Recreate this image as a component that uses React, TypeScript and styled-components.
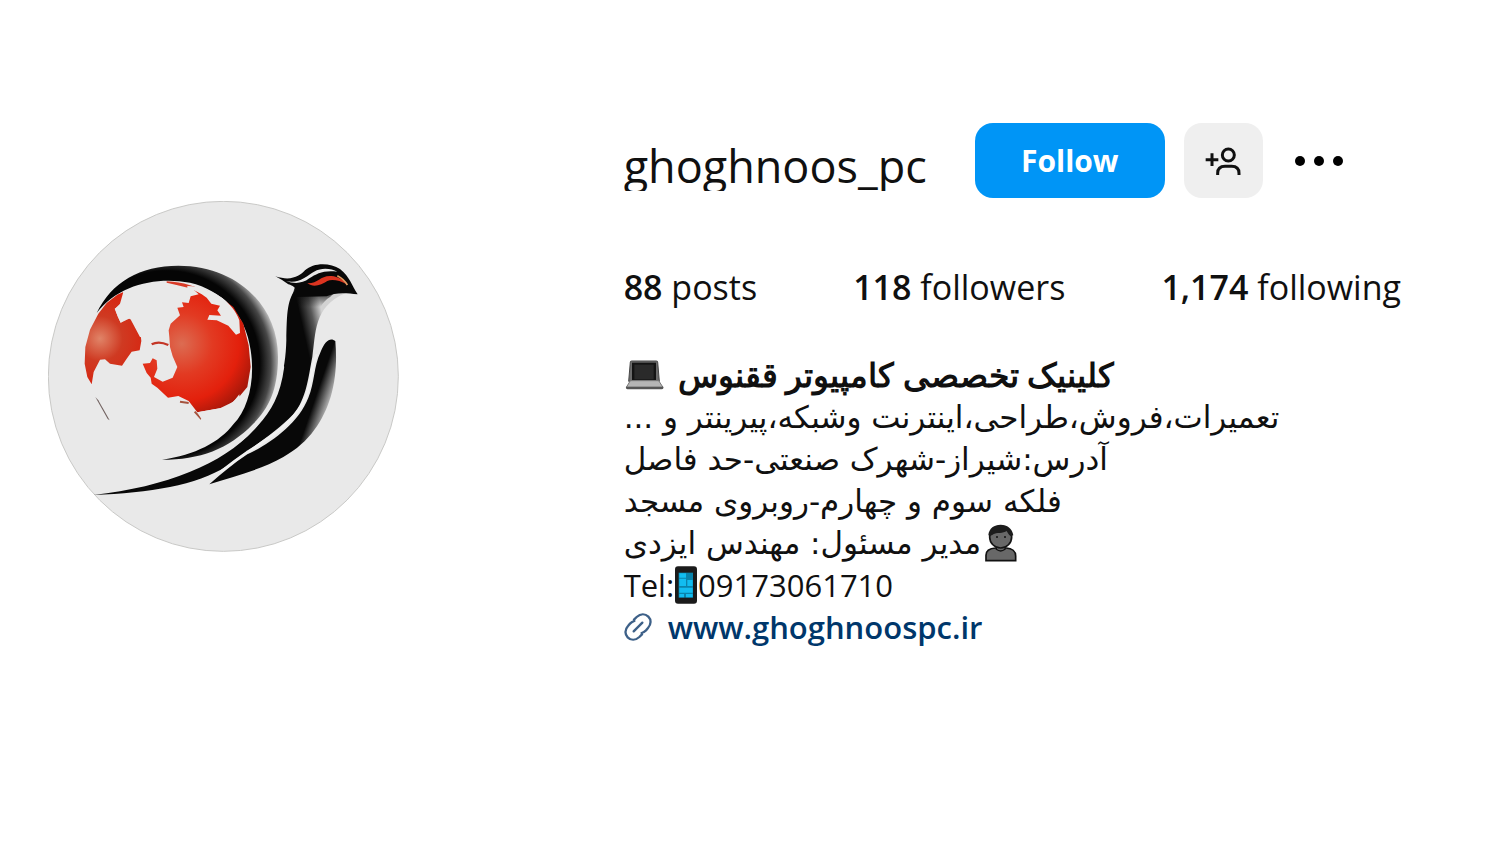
import React from 'react';
import styled, { createGlobalStyle } from 'styled-components';

const GlobalStyle = createGlobalStyle`
  body {
    margin: 0;
    background: #fff;
    color: #101010;
    font-family: 'Open Sans', 'Noto Sans', sans-serif;
  }
`;

const Profile = styled.main`
  display: grid;
  grid-template-columns: 41% 1fr;
  align-items: start;
  padding: 123px 48px 0;
`;

const Avatar = styled.svg`
  display: block;
  width: 351px;
  height: 351px;
  margin-top: 78px;
`;

const Details = styled.section`
  min-width: 0;
`;

const Header = styled.header`
  display: flex;
  align-items: center;
  height: 75px;
`;

const Username = styled.h1`
  margin: 0 48px 0 0;
  height: 60px;
  overflow: hidden;
  font-size: 45px;
  font-weight: 400;
  line-height: 70px;
`;

const Button = styled.button<{ $primary?: boolean }>`
  display: flex;
  align-items: center;
  justify-content: center;
  width: ${(p) => (p.$primary ? 190 : 79)}px;
  height: 75px;
  margin-right: ${(p) => (p.$primary ? 19 : 32)}px;
  padding: 0;
  border: 0;
  border-radius: 18px;
  background: ${(p) => (p.$primary ? '#0095f6' : '#efefef')};
  color: ${(p) => (p.$primary ? '#fff' : '#101010')};
  font-family: inherit;
  font-size: 30px;
  font-weight: 700;
  cursor: pointer;
`;

const MoreButton = styled.button`
  display: flex;
  padding: 0;
  border: 0;
  background: none;
  cursor: pointer;
`;

const Stats = styled.ul`
  display: flex;
  gap: 96px;
  margin: 64px 0 42px;
  padding: 0;
  list-style: none;
  font-size: 34px;
  line-height: 50px;
  white-space: nowrap;

  b {
    font-weight: 600;
  }
`;

const Line = styled.div<{ $gap?: number }>`
  display: flex;
  align-items: center;
  justify-content: flex-start;
  gap: ${(p) => p.$gap ?? 4}px;
  height: 42px;
  font-size: 31px;
  line-height: 42px;
  white-space: nowrap;

  &[dir='rtl'] {
    justify-content: flex-end;
    font-family: 'DejaVu Sans', sans-serif;
  }
`;

const Title = styled.h2`
  margin: 0;
  font-family: 'Open Sans', sans-serif;
  font-size: 33px;
  font-weight: 700;
`;

const SiteLink = styled.a`
  color: #00376b;
  font-weight: 600;
  text-decoration: none;
`;

const PhoenixLogo = () => (
  <Avatar viewBox="24 32 1053 1053" role="img" aria-label="ghoghnoos_pc profile picture">
    <defs>
      <radialGradient id="globeLeft" gradientUnits="userSpaceOnUse" cx="180" cy="445" r="150">
        <stop offset="0" stopColor="#e08468" />
        <stop offset="0.45" stopColor="#cf3a22" />
        <stop offset="1" stopColor="#d8230f" />
      </radialGradient>
      <radialGradient id="globeRight" gradientUnits="userSpaceOnUse" cx="425" cy="460" r="230">
        <stop offset="0" stopColor="#dc6c52" />
        <stop offset="0.4" stopColor="#e23a22" />
        <stop offset="0.75" stopColor="#e3200c" />
        <stop offset="1" stopColor="#a8180a" />
      </radialGradient>
      <radialGradient id="arc" gradientUnits="userSpaceOnUse" cx="380" cy="520" r="336">
        <stop offset="0.83" stopColor="#050505" />
        <stop offset="0.93" stopColor="#484848" />
        <stop offset="1" stopColor="#b4b4b4" />
      </radialGradient>
      <linearGradient id="neck" gradientUnits="userSpaceOnUse" x1="740" y1="400" x2="848" y2="376">
        <stop offset="0.4" stopColor="#080808" />
        <stop offset="0.72" stopColor="#585858" />
        <stop offset="1" stopColor="#d2d2d2" />
      </linearGradient>
      <linearGradient id="wing" gradientUnits="userSpaceOnUse" x1="820" y1="540" x2="896" y2="566">
        <stop offset="0.4" stopColor="#080808" />
        <stop offset="1" stopColor="#c4c4c4" />
      </linearGradient>
      <linearGradient id="head" gradientUnits="userSpaceOnUse" x1="850" y1="270" x2="850" y2="350">
        <stop offset="0.3" stopColor="#080808" />
        <stop offset="1" stopColor="#080808" stopOpacity="0" />
      </linearGradient>
    </defs>
    <circle cx="550" cy="558" r="525" fill="#e9e9e9" stroke="#c9c9c7" strokeWidth="3" />
    <path
      fill="url(#arc)"
      d="M170 368C215 275 300 226 415 226C590 226 714 345 714 500C714 600 685 655 640 700C565 777 480 808 366 808C465 795 540 755 580 702C625 655 646 570 632 480C618 370 545 300 450 277C350 258 235 282 170 368Z"
    />
    <path
      fill="url(#globeLeft)"
      d="M250 305L232 313L200 338L175 370L150 418L136 470L134 520L142 560L155 582L161 545L180 508L195 507L210 520L246 526L258 508L275 484L299 480L304 452L300 415L286 392L262 383L242 397L233 378L224 355L240 345L250 322Z"
    />
    <path fill="#e9e9e9" d="M250 305C320 268 400 268 470 300C560 340 604 400 622 450L590 500L390 450L300 440L270 384L242 397L233 378L225 355L240 340Z" />
    <path fill="#d93a26" d="M380 273C430 276 470 288 500 306C465 296 425 288 380 277Z" />
    <path
      fill="url(#globeRight)"
      d="M452 318L446 338L426 336L431 350L412 352L420 375L392 400L386 420L388 440L390 470L398 498L412 530L398 562L368 574L342 560L352 535L350 510L338 504L330 518L308 520L320 548L332 562L335 580L352 592L384 622L415 617L446 632L472 666L560 650L600 616L622 590L632 530L626 465L610 400L580 350L540 320L500 300L452 290L476 312Z"
    />
    <path fill="#e9e9e9" d="M442 287C480 288 518 302 548 324C570 342 588 362 598 390L600 428L588 433L565 406L530 390L502 388L508 374L543 376L532 360L540 346L514 340L500 322C480 308 462 298 442 294Z" />
    <path fill="none" stroke="#c43626" strokeWidth="7" d="M335 462C350 454 368 456 385 464" />
    <path fill="none" stroke="#a5543f" strokeWidth="6" d="M420 634L446 638M464 664L484 686" />
    <path fill="#e9e9e9" d="M484 686L472 666L540 654L580 634L598 612L600 640L588 655L584 682C572 700 556 714 540 724L470 720Z" />
    <path fill="#70605e" d="M166 620L175 630L209 690L203 686Z" />
    <path
      fill="url(#neck)"
      d="M775 290C740 320 741 370 739 450C737 540 715 640 640 720C550 820 380 890 160 914C330 908 470 885 560 828C620 780 700 735 760 672C800 625 805 560 817 500C828 430 820 350 915 309L900 270Z"
    />
    <path
      fill="url(#wing)"
      d="M886 452C872 440 855 450 842 484C820 530 825 575 805 622C775 700 690 760 622 792C580 820 545 850 508 882C580 858 660 840 730 800C810 755 850 690 872 620C890 560 890 500 886 452Z"
    />
    <path fill="none" stroke="#e9e9e9" strokeWidth="7" strokeLinecap="round" d="M729 530C718 615 690 660 650 705C620 740 590 764 545 788" />
    <path fill="none" stroke="#f1f1f1" strokeWidth="8" strokeLinecap="round" d="M829 495C808 545 817 590 788 640C750 705 690 742 622 785C600 800 570 822 545 842" />
    <path
      fill="#080808"
      d="M706 258C755 274 780 256 795 240C820 216 870 216 900 236C930 260 935 285 953 312C920 308 885 305 860 318L770 320C765 300 775 292 745 282L725 268Z"
    />
    <path fill="url(#head)" d="M770 275L900 290L870 320C845 335 835 360 820 400L745 350Z" />
    <path fill="#e9e9e9" d="M738 272C775 282 798 258 822 244C848 230 875 236 892 244C850 239 830 250 808 264C785 282 760 280 738 272Z" />
    <path fill="#dc3420" d="M802 279C835 280 840 255 874 257C895 259 910 268 920 282C900 270 875 266 862 272C845 282 823 294 802 279Z" />
    <path fill="none" stroke="#e39a60" strokeWidth="5" d="M892 256C908 264 916 273 922 284" />
  </Avatar>
);

const AddPersonIcon = () => (
  <svg width="36" height="28" viewBox="738 110 108 84" fill="none" stroke="currentColor" strokeWidth="9" aria-hidden="true">
    <circle cx="808" cy="134" r="18" />
    <path d="M776 194V189C776 174 785 168 798 168H818C832 168 840 175 840 189V194" />
    <path d="M740 148H778M759 129V167" />
  </svg>
);

const MoreIcon = () => (
  <svg width="48" height="12" viewBox="0 0 48 12" aria-hidden="true">
    <circle cx="5" cy="6" r="5" />
    <circle cx="24" cy="6" r="5" />
    <circle cx="43" cy="6" r="5" />
  </svg>
);

const LaptopIcon = () => (
  <svg width="42" height="30" viewBox="0 0 126 90" aria-hidden="true">
    <path fill="#6c6c6c" stroke="#484848" strokeWidth="3" d="M19 6Q19 3 23 3H97Q101 3 101 6L106 64H14Z" />
    <path fill="#141414" d="M24 8H96V60H24Z" />
    <path fill="#2a2a2a" d="M31 14H89V58H31Z" />
    <path fill="#b5b5b5" stroke="#777" strokeWidth="3" d="M19 62H104L117 82H7Z" />
    <path fill="#555" d="M6 80H118V85Q117 88 113 88H11Q6 88 6 84Z" />
  </svg>
);

const PersonIcon = () => (
  <svg width="32" height="38" viewBox="0 0 96 114" aria-hidden="true">
    <path fill="#686868" stroke="#111" strokeWidth="5" d="M3 110V94C3 80 15 73 32 72H64C81 73 92 82 92 96V110Z" />
    <path fill="#686868" stroke="#111" strokeWidth="4" d="M34 64H60V76Q47 86 34 76Z" />
    <circle cx="47" cy="39" r="33" fill="#686868" stroke="#151515" strokeWidth="5" />
    <path fill="#1c1c1c" d="M10 34C12 12 28 2 47 2S82 13 85 34L77 36C70 32 68 26 65 21C55 29 34 25 25 31Q20 36 10 34Z" />
    <circle cx="36" cy="39" r="3" fill="#111" />
    <circle cx="60" cy="39" r="3" fill="#111" />
  </svg>
);

const PhoneIcon = () => (
  <svg width="24" height="38" viewBox="0 0 72 114" aria-hidden="true">
    <rect x="3" y="1" width="66" height="112" rx="9" fill="#1b1b1b" />
    <rect x="14" y="20" width="43" height="75" fill="#0a84ac" />
    <path fill="#12bdf0" d="M16 22H36V35H16ZM16 38H36V60H16ZM40 42H56V60H40ZM16 65H56V80H16ZM16 84H30V94H16ZM36 84H56V94H36Z" />
  </svg>
);

const LinkIcon = () => (
  <svg width="28" height="28" viewBox="0 0 84 84" fill="none" stroke="#3d6088" strokeWidth="7" strokeLinecap="round" aria-hidden="true">
    <path d="M30 20L38 12C50 1 64 2 73 11S82 34 72 45L66 52Q60 58 53 60" />
    <path d="M54 64L46 72C34 83 20 82 11 73S2 50 12 39L18 32Q24 26 31 24" />
    <path d="M29 55L55 29" />
  </svg>
);

const stats = [
  { count: '88', label: 'posts' },
  { count: '118', label: 'followers' },
  { count: '1,174', label: 'following' },
];

export default function App() {
  return (
    <>
      <GlobalStyle />
      <Profile>
        <PhoenixLogo />
        <Details>
          <Header>
            <Username>ghoghnoos_pc</Username>
            <Button $primary type="button">Follow</Button>
            <Button type="button" aria-label="Similar accounts">
              <AddPersonIcon />
            </Button>
            <MoreButton type="button" aria-label="Options">
              <MoreIcon />
            </MoreButton>
          </Header>
          <Stats>
            {stats.map((s) => (
              <li key={s.label}>
                <b>{s.count}</b> {s.label}
              </li>
            ))}
          </Stats>
          <Line dir="rtl" $gap={12}>
            <Title>کلینیک تخصصی کامپیوتر ققنوس</Title>
            <LaptopIcon />
          </Line>
          <Line dir="rtl">تعمیرات،فروش،طراحی،اینترنت وشبکه،پیرینتر و ...</Line>
          <Line dir="rtl">آدرس:شیراز-شهرک صنعتی-حد فاصل</Line>
          <Line dir="rtl">فلکه سوم و چهارم-روبروی مسجد</Line>
          <Line dir="rtl">
            <PersonIcon />
            <span>مدیر مسئول: مهندس ایزدی</span>
          </Line>
          <Line $gap={0}>
            <span>Tel:</span>
            <PhoneIcon />
            <span>09173061710</span>
          </Line>
          <Line $gap={16}>
            <LinkIcon />
            <SiteLink href="#website">www.ghoghnoospc.ir</SiteLink>
          </Line>
        </Details>
      </Profile>
    </>
  );
}
